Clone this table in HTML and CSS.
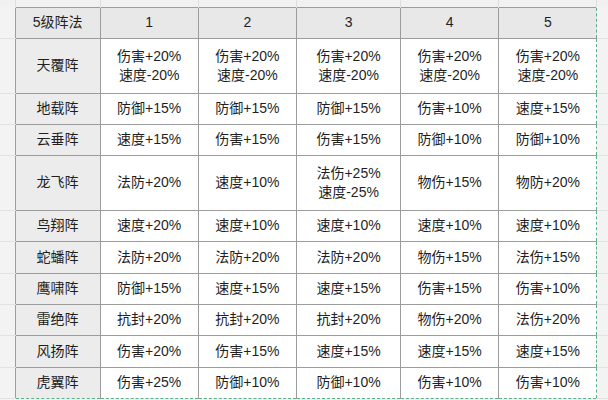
FILE: index.html
```html
<!DOCTYPE html>
<html lang="zh">
<head>
<meta charset="utf-8">
<title>5级阵法</title>
<link rel="stylesheet" href="styles.css">
</head>
<body>
<table class="sheet">
  <colgroup>
    <col class="c-gut"><col class="c-name"><col class="c-98"><col class="c-98"><col class="c-104"><col class="c-98"><col class="c-98"><col class="c-rgut">
  </colgroup>
  <tr class="r-top"><td class="gt"></td><td class="gt"></td><td class="gt"></td><td class="gt"></td><td class="gt"></td><td class="gt"></td><td class="gt"></td><td class="gt last"></td></tr>
  <tr class="r-h"><td class="gl"></td><th class="hd">5级阵法</th><th class="hd">1</th><th class="hd">2</th><th class="hd">3</th><th class="hd">4</th><th class="hd end">5</th><td class="gr"></td></tr>
  <tr class="r-2"><td class="gl"></td><th class="nm">天覆阵</th><td>伤害+20%<br>速度-20%</td><td>伤害+20%<br>速度-20%</td><td>伤害+20%<br>速度-20%</td><td>伤害+20%<br>速度-20%</td><td class="end">伤害+20%<br>速度-20%</td><td class="gr"></td></tr>
  <tr class="r-1"><td class="gl"></td><th class="nm">地载阵</th><td>防御+15%</td><td>防御+15%</td><td>防御+15%</td><td>伤害+10%</td><td class="end">速度+15%</td><td class="gr"></td></tr>
  <tr class="r-1"><td class="gl"></td><th class="nm">云垂阵</th><td>速度+15%</td><td>伤害+15%</td><td>伤害+15%</td><td>防御+10%</td><td class="end">防御+10%</td><td class="gr"></td></tr>
  <tr class="r-2"><td class="gl"></td><th class="nm">龙飞阵</th><td>法防+20%</td><td>速度+10%</td><td>法伤+25%<br>速度-25%</td><td>物伤+15%</td><td class="end">物防+20%</td><td class="gr"></td></tr>
  <tr class="r-1"><td class="gl"></td><th class="nm">鸟翔阵</th><td>速度+20%</td><td>速度+10%</td><td>速度+10%</td><td>速度+10%</td><td class="end">速度+10%</td><td class="gr"></td></tr>
  <tr class="r-1b"><td class="gl"></td><th class="nm">蛇蟠阵</th><td>法防+20%</td><td>法防+20%</td><td>法防+20%</td><td>物伤+15%</td><td class="end">法伤+15%</td><td class="gr"></td></tr>
  <tr class="r-1"><td class="gl"></td><th class="nm">鹰啸阵</th><td>防御+15%</td><td>速度+15%</td><td>速度+15%</td><td>伤害+15%</td><td class="end">伤害+10%</td><td class="gr"></td></tr>
  <tr class="r-1"><td class="gl"></td><th class="nm">雷绝阵</th><td>抗封+20%</td><td>抗封+20%</td><td>抗封+20%</td><td>物伤+20%</td><td class="end">法伤+20%</td><td class="gr"></td></tr>
  <tr class="r-1b"><td class="gl"></td><th class="nm">风扬阵</th><td>伤害+20%</td><td>伤害+15%</td><td>速度+15%</td><td>速度+15%</td><td class="end">速度+15%</td><td class="gr"></td></tr>
  <tr class="r-1 r-last"><td class="gl"></td><th class="nm">虎翼阵</th><td>伤害+25%</td><td>防御+10%</td><td>防御+10%</td><td>伤害+10%</td><td class="end">伤害+10%</td><td class="gr"></td></tr>
</table>
</body>
</html>
```
FILE: styles.css
```css
html, body {
  margin: 0;
  padding: 0;
  background: #f3f3f3;
  width: 608px;
  height: 400px;
  overflow: hidden;
}
.sheet {
  border-collapse: collapse;
  table-layout: fixed;
  width: 608px;
  font-family: "Liberation Sans", "Noto Sans CJK SC", sans-serif;
  font-size: 14px;
  color: #1f1f1f;
}
.c-gut { width: 15px; }
.c-name { width: 85px; }
.c-98 { width: 98px; }
.c-104 { width: 104px; }
.c-rgut { width: 11px; }

.sheet td, .sheet th {
  padding: 0;
  text-align: center;
  vertical-align: middle;
  font-weight: normal;
  line-height: 19px;
  border: 1px solid #9c9c9c;
  background: #ffffff;
}
.sheet td.gt {
  background: #f1f1f1;
  border-top: none;
  border-left: none;
  border-bottom: none;
  border-right: 1px solid #dedede;
}
.sheet td.gt.last { border-right: none; }
.sheet td.gl, .sheet td.gr {
  background: #f3f3f3;
  border-top: none;
  border-left: none;
  border-right: none;
  border-bottom: 1px solid #e2e2e2;
}
.sheet .hd { background: #e8e8e8; }
.sheet .nm { background: #ececec; }
.sheet .end { border-right: 1px dashed #5fae8a; }
.r-last td:not(.gl):not(.gr), .r-last th { border-bottom: 1px dashed #5fae8a; }

.r-top { height: 7px; }
.r-h { height: 31px; }
.r-2 { height: 55px; }
.r-1 { height: 31px; }
.r-1b { height: 32px; }
```
